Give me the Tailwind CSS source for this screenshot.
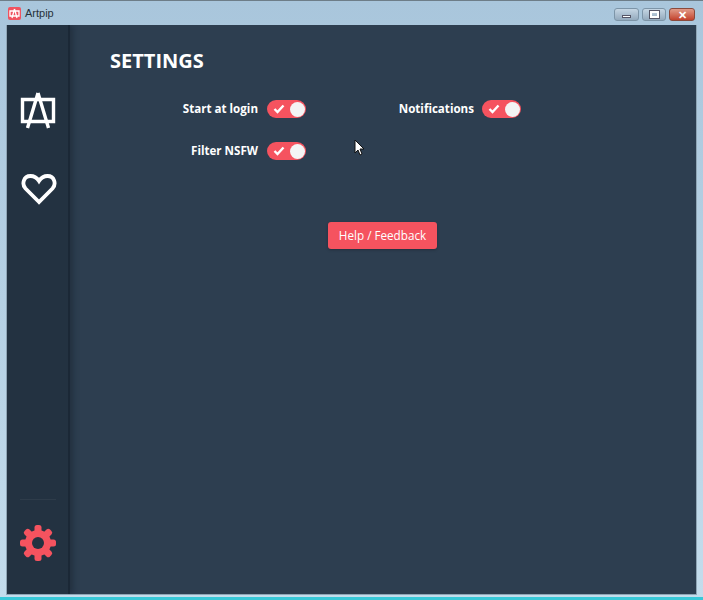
<!DOCTYPE html>
<html lang="en">
<head>
    <meta charset="UTF-8">
    <title>Artpip</title>
    <script src="https://cdn.jsdelivr.net/npm/@tailwindcss/browser@4"></script>
</head>
<body class="w-[703px] h-[600px] overflow-hidden font-['Open_Sans',sans-serif]">
    <!-- Window frame -->
    <div class="relative w-[703px] h-[600px] flex flex-col bg-gradient-to-b from-[#a9c6dc] to-[#c3dcec] border-t border-[#6d7d88] border-b-[3px] border-b-[#38c8d8]">
        <!-- Title bar -->
        <div class="h-[24px] shrink-0 flex items-center pl-[8px] pr-[8px]">
            <div class="w-[13px] h-[13px] bg-[#f0525f] rounded-[2px] flex items-center justify-center">
                <svg width="11" height="11" viewBox="0 0 11 11" fill="none" stroke="#fff" stroke-width="1.3"><path d="M1 3h9v5H1zM5.5 1L3 10M5.5 1L8 10"/></svg>
            </div>
            <span class="ml-[4px] text-[11px] text-[#26323a] font-['Liberation_Sans',sans-serif]">Artpip</span>
            <div class="ml-auto flex gap-[3px] mt-[3px]">
                <div class="w-[25px] h-[13px] rounded-[3px] border border-[#7d95a8] bg-gradient-to-b from-[#c5d6e4] to-[#94aabd] flex items-center justify-center pt-[3px]"><div class="w-[9px] h-[3px] bg-white border-[0.5px] border-[#556]"></div></div>
                <div class="w-[24px] h-[13px] rounded-[3px] border border-[#7d95a8] bg-gradient-to-b from-[#c5d6e4] to-[#94aabd] flex items-center justify-center"><div class="w-[9px] h-[7px] border-2 border-white outline outline-[#556]"></div></div>
                <div class="w-[26px] h-[13px] rounded-[3px] border border-[#8a4a3c] bg-gradient-to-b from-[#e09a88] to-[#c2402c] flex items-center justify-center text-white text-[11px] font-bold leading-none">✕</div>
            </div>
        </div>

        <!-- App area -->
        <div class="flex-1 mx-[6px] mb-[2px] flex bg-[#2d3e50] border border-[#8fa5b5] border-t-0 min-h-0 overflow-hidden">
            <!-- Sidebar -->
            <nav class="w-[63px] shrink-0 flex flex-col items-center bg-[#233241] border-r-[2px] border-[#1b2836] shadow-[3px_0_6px_rgba(20,30,42,0.45)]">
                <svg class="mt-[67px]" width="36" height="37" viewBox="0 0 36 37" fill="none" stroke="#fff" stroke-width="3.400">
                    <path d="M2.500 7.500h31v22h-31z"/>
                    <path d="M18 1L7.500 36M18 1L28.500 36"/>
                </svg>
                <svg class="mt-[44px] ml-[2px]" width="36" height="32" viewBox="0 0 36 32" fill="none" stroke="#fff" stroke-width="3.800">
                    <path d="M18 29L4.500 15.500C0.500 11 2.500 3 9.500 3C13.500 3 16 5 18 8C20 5 22.500 3 26.500 3C33.500 3 35.500 11 31.500 15.500Z"/>
                </svg>
                <div class="mt-auto w-[36px] h-px bg-white/5"></div>
                <svg class="mt-[25px] mb-[33px] ml-[1px]" width="36" height="36" viewBox="0 0 36 36">
                    <g fill="#f5535f">
                        <circle cx="18" cy="18" r="13"/>
                        <rect x="14.500" y="0" width="7" height="36" rx="2.500"/>
                        <rect x="14.500" y="0" width="7" height="36" rx="2.500" transform="rotate(45 18 18)"/>
                        <rect x="14.500" y="0" width="7" height="36" rx="2.500" transform="rotate(90 18 18)"/>
                        <rect x="14.500" y="0" width="7" height="36" rx="2.500" transform="rotate(135 18 18)"/>
                    </g>
                    <circle cx="18" cy="18" r="6" fill="#233241"/>
                </svg>
            </nav>

            <!-- Settings -->
            <main class="flex-1 pl-[40px] pt-[22px]">
                <h1 class="text-[20px] leading-[27px] font-bold text-white">SETTINGS</h1>
                <div class="mt-[26px] grid grid-cols-[157px_39px_176px_39px] gap-y-[24px] items-center w-fit">
                    <span class="text-right pr-[9px] text-[11.6px] leading-[18px] font-bold text-white whitespace-nowrap">Start at login</span>
                    <div class="w-[39px] h-[18px] rounded-full bg-[#f5535f] flex items-center justify-between pl-[6px] pr-[1px]">
                        <svg width="12" height="10" viewBox="0 0 12 10" fill="none" stroke="#fff" stroke-width="2.400"><path d="M1.500 5l3 3 6-6.500"/></svg>
                        <div class="w-[15px] h-[15px] rounded-full bg-[#f4f4f4]"></div>
                    </div>
                    <span class="text-right pr-[8px] text-[11.6px] leading-[18px] font-bold text-white whitespace-nowrap">Notifications</span>
                    <div class="w-[39px] h-[18px] rounded-full bg-[#f5535f] flex items-center justify-between pl-[6px] pr-[1px]">
                        <svg width="12" height="10" viewBox="0 0 12 10" fill="none" stroke="#fff" stroke-width="2.400"><path d="M1.500 5l3 3 6-6.500"/></svg>
                        <div class="w-[15px] h-[15px] rounded-full bg-[#f4f4f4]"></div>
                    </div>
                    <span class="text-right pr-[9px] text-[11.6px] leading-[18px] font-bold text-white whitespace-nowrap">Filter NSFW</span>
                    <div class="w-[39px] h-[18px] rounded-full bg-[#f5535f] flex items-center justify-between pl-[6px] pr-[1px]">
                        <svg width="12" height="10" viewBox="0 0 12 10" fill="none" stroke="#fff" stroke-width="2.400"><path d="M1.500 5l3 3 6-6.500"/></svg>
                        <div class="w-[15px] h-[15px] rounded-full bg-[#f4f4f4]"></div>
                    </div>
                </div>
                <button class="block mt-[62px] ml-[218px] w-[109px] h-[27px] rounded-[3px] bg-[#f5535f] text-white text-[11.7px] shadow-[0_1px_3px_rgba(0,0,0,0.25)]">Help / Feedback</button>
            </main>
        </div>

        <!-- Mouse cursor -->
        <svg class="absolute left-[354px] top-[138px]" width="11" height="17" viewBox="0 0 11 17">
            <path d="M1 1v13l3-3 2 5 2-1-2-5h4z" fill="#fff" stroke="#111" stroke-width="1"/>
        </svg>
    </div>
</body>
</html>
